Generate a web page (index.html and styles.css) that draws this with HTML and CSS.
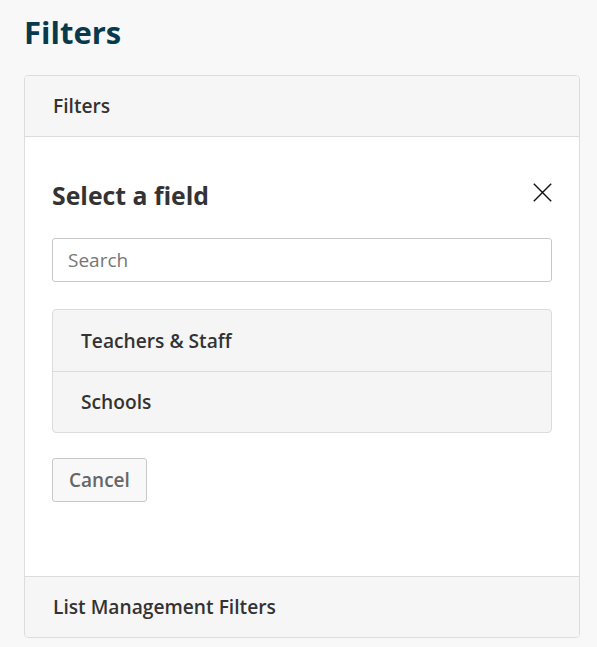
FILE: index.html
```html
<!DOCTYPE html>
<html>
<head>
<meta charset="utf-8">
<link rel="stylesheet" href="styles.css">
</head>
<body>
<div class="page">
  <h1 class="page-title">Filters</h1>
  <div class="card">
    <div class="card-header">Filters</div>
    <div class="card-body">
      <div class="dialog-head">
        <h2 class="dialog-title">Select a field</h2>
        <button class="close" aria-label="Close">
          <svg width="19" height="19" viewBox="0 0 19 19"><path d="M0.8 0.8 L18.2 18.2 M18.2 0.8 L0.8 18.2" stroke="#111" stroke-width="1.4" fill="none"/></svg>
        </button>
      </div>
      <input class="search" type="text" placeholder="Search">
      <div class="list">
        <div class="list-item">Teachers &amp; Staff</div>
        <div class="list-item">Schools</div>
      </div>
      <button class="btn">Cancel</button>
    </div>
    <div class="card-footer">List Management Filters</div>
  </div>
</div>
</body>
</html>
```

FILE: styles.css
```css
html, body {
  margin: 0;
  padding: 0;
  background: #f8f8f8;
  font-family: "Open Sans", "Noto Sans", sans-serif;
  color: #333;
}
.page {
  padding: 0 17px 0 24px;
}
.page-title {
  margin: 13px 0 24px;
  font-size: 31px;
  line-height: 38px;
  font-weight: 700;
  color: #083a4e;
}
.card {
  border: 1px solid #dcdcdc;
  border-radius: 4px;
  background: #fff;
  overflow: hidden;
}
.card-header, .card-footer {
  background: #f6f6f6;
  height: 60px;
  line-height: 60px;
  padding: 0 28px;
  font-size: 19.2px;
  font-weight: 600;
  color: #333;
}
.card-header {
  border-bottom: 1px solid #dcdcdc;
}
.card-footer {
  border-top: 1px solid #dcdcdc;
}
.card-body {
  padding: 42px 27px 74px 27px;
  display: flex;
  flex-direction: column;
  align-items: flex-start;
}
.dialog-head {
  align-self: stretch;
  display: flex;
  justify-content: space-between;
  align-items: center;
  height: 32px;
  margin-bottom: 27px;
}
.dialog-title {
  margin: 0;
  font-size: 24.8px;
  line-height: 32px;
  font-weight: 700;
  color: #333;
}
.close {
  border: 0;
  background: none;
  padding: 0;
  margin-right: 0;
  margin-top: -6px;
  width: 19px;
  height: 19px;
  display: flex;
}
.search {
  align-self: stretch;
  box-sizing: border-box;
  height: 44px;
  border: 1px solid #c8c8c8;
  border-radius: 3px;
  padding: 0 15px;
  font-family: inherit;
  font-size: 19px;
  color: #333;
  background: #fff;
  margin: 0 0 27px;
  outline: none;
}
.search::placeholder {
  color: #767676;
}
.list {
  align-self: stretch;
  background: #f5f5f5;
  border: 1px solid #dcdcdc;
  border-radius: 4px;
  margin-bottom: 25px;
}
.list-item {
  height: 61px;
  line-height: 61px;
  padding: 0 28px;
  font-size: 19.2px;
  font-weight: 600;
  color: #333;
}
.list-item + .list-item {
  border-top: 1px solid #dcdcdc;
  height: 60px;
  line-height: 60px;
}
.btn {
  height: 44px;
  box-sizing: border-box;
  padding: 0 16px;
  border: 1px solid #c8c8c8;
  border-radius: 3px;
  background: #f8f8f8;
  font-family: inherit;
  font-size: 19px;
  font-weight: 600;
  color: #666;
}
```
